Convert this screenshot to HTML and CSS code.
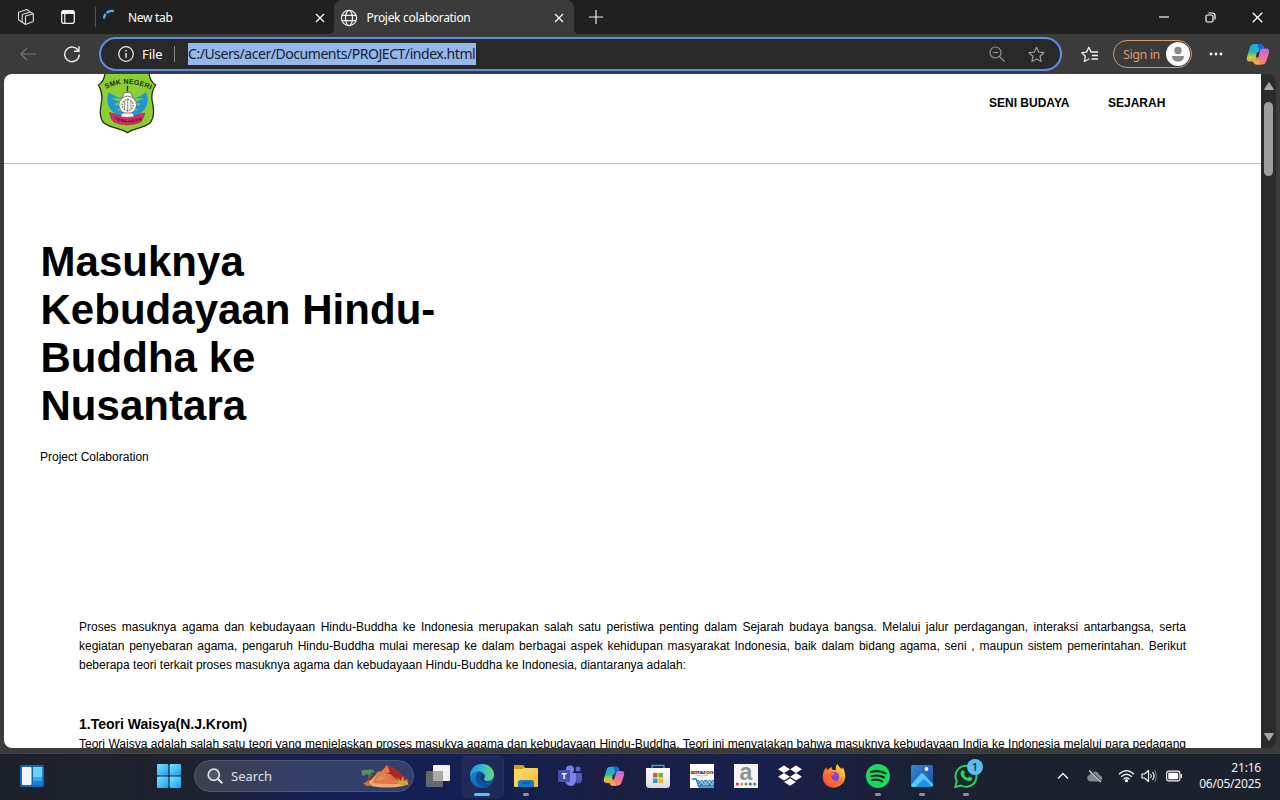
FILE: index.html
```html
<!DOCTYPE html>
<html lang="id">
<head>
<meta charset="utf-8">
<title>Projek colaboration</title>
<link rel="stylesheet" href="styles.css">
</head>
<body>
<svg class="defs" width="0" height="0">
  <defs>
    <linearGradient id="cpA" x1="0" y1="0" x2="0" y2="1"><stop offset="0" stop-color="#16a4ee"/><stop offset=".45" stop-color="#2bb3b0"/><stop offset=".75" stop-color="#c6cb3c"/><stop offset="1" stop-color="#f0a52c"/></linearGradient>
    <linearGradient id="cpB" x1="0" y1="0" x2="0" y2="1"><stop offset="0" stop-color="#b06cf0"/><stop offset=".5" stop-color="#ee6fa2"/><stop offset="1" stop-color="#f9885a"/></linearGradient>
    <linearGradient id="win" x1="0" y1="0" x2="1" y2="1"><stop offset="0" stop-color="#7ce5fb"/><stop offset="1" stop-color="#169bf4"/></linearGradient>
    <linearGradient id="edgeTop" x1="0" y1="0" x2="1" y2="0"><stop offset="0" stop-color="#2294d8"/><stop offset=".5" stop-color="#30b9d4"/><stop offset="1" stop-color="#66dc62"/></linearGradient>
    <linearGradient id="edgeLow" x1="0" y1="0" x2="1" y2="1"><stop offset="0" stop-color="#1b8cdf"/><stop offset="1" stop-color="#0c4f9e"/></linearGradient>
    <linearGradient id="folder" x1="0" y1="0" x2="1" y2="1"><stop offset="0" stop-color="#ffe07a"/><stop offset="1" stop-color="#f8bb2a"/></linearGradient>
    <linearGradient id="fox" x1="1" y1="0" x2="0" y2="1"><stop offset="0" stop-color="#ffe94a"/><stop offset=".45" stop-color="#ff9428"/><stop offset="1" stop-color="#f02f50"/></linearGradient>
    <linearGradient id="photo" x1="0" y1="0" x2="1" y2="1"><stop offset="0" stop-color="#3587d8"/><stop offset="1" stop-color="#1750a2"/></linearGradient>
    <linearGradient id="bag" x1="0" y1="0" x2="0" y2="1"><stop offset="0" stop-color="#ffffff"/><stop offset="1" stop-color="#dcdcdf"/></linearGradient>
    <linearGradient id="sand" x1="0" y1="0" x2="1" y2="0"><stop offset="0" stop-color="#f4a66c"/><stop offset="1" stop-color="#c5482c"/></linearGradient>
    <symbol id="copilot" viewBox="0 0 24 22">
      <path fill="url(#cpA)" d="M8 1h6c2 0 3 1 3.500 3l.7 2.500h-3c-1.600 0-2.400.9-2.800 2.400L10.500 16c-.4 1.500-1.500 2.500-3 2.500H3.500C1 18.500.3 16.500 1 14L4 4C4.600 2 6 1 8 1z"/>
      <path fill="#1763d2" d="M11.500 1H14c2 0 3 1 3.500 3l.7 2.500h-3L13 7C12 3.500 12.500 2 11.500 1z"/>
      <path fill="url(#cpB)" d="M16.500 5.500H20c2.700 0 3.600 2 3 4.500l-2.800 8.200c-.7 2-2 3.300-4 3.300h-5.700c-1.700 0-2.700-1-3.300-3l-.5-2h2.600c1.500 0 2.300-1 2.700-2.400L14 8c.4-1.500 1-2.500 2.500-2.500z"/>
      <path fill="#f7a34c" d="M6.700 16.500h2.600c1.300 0 2-.6 2.500-1.800l1 3.300c.4 1.500.8 3 2.200 3.500h-4.500c-1.700 0-2.700-1-3.300-3z"/>
      <path fill="#293346" d="M10.700 9.500 13.600 9l-1.300 5-2.500.3z"/>
    </symbol>
  </defs>
</svg>

<header class="tabs">
  <svg class="ic workspaces" viewBox="0 0 18 18"><g fill="none" stroke="#ddd" stroke-width="1.100" stroke-linejoin="round"><path d="M8.500 8 16.300 5.800V13.500L8.500 16.500z"/><path d="M8.500 16.500 5.200 14.300V6.500L13 3.900M5.200 14.300 1.500 11.800V4.300L9.800 1.500M13 3.900l3.300 1.900M9.800 1.500 13 3.900"/></g></svg>
  <svg class="ic tabaction" viewBox="0 0 16 16"><rect x="1.700" y="1.700" width="12.600" height="12.600" rx="2" fill="none" stroke="#f2f2f2" stroke-width="1.300"/><path d="M1.500 5V3.500q0-2 2-2h9q2 0 2 2V5z" fill="#f2f2f2"/><path d="M4.800 5v9" stroke="#f2f2f2" stroke-width="1.200"/></svg>
  <span class="tabsep"></span>
  <div class="tab first">
    <svg class="ic loading" viewBox="0 0 14 14"><path d="M2 10.500A8 8 0 0 1 3.700 6M4.500 5A8 8 0 0 1 12 3.200" fill="none" stroke="#55ade3" stroke-width="2.400"/></svg>
    <span class="label newtab">New tab</span>
    <svg class="ic close" viewBox="0 0 10 10"><path d="M1 1l8 8M9 1l-8 8" stroke="#fff" stroke-width="1.200"/></svg>
  </div>
  <div class="tab active">
    <svg class="ic globe" viewBox="0 0 18 18"><g fill="none" stroke="#eee" stroke-width="1.200"><circle cx="9" cy="9" r="7.600"/><ellipse cx="9" cy="9" rx="3.500" ry="7.600"/><path d="M2 6.300h14M2 11.700h14"/></g></svg>
    <span class="label projek">Projek colaboration</span>
    <svg class="ic close" viewBox="0 0 10 10"><path d="M1 1l8 8M9 1l-8 8" stroke="#fff" stroke-width="1.200"/></svg>
  </div>
  <svg class="ic plus" viewBox="0 0 14 14"><path d="M7 0v14M0 7h14" stroke="#eee" stroke-width="1.200"/></svg>
  <div class="winctl">
    <svg width="10" height="10" viewBox="0 0 10 10"><path d="M0 5h10" stroke="#fff" stroke-width="1.200"/></svg>
    <svg width="11" height="11" viewBox="0 0 11 11"><g fill="none" stroke="#fff" stroke-width="1.200"><rect x="1" y="3" width="7" height="7" rx="1.500"/><path d="M3.500 1h4q2.500 0 2.500 2.500v4"/></g></svg>
    <svg width="11" height="11" viewBox="0 0 11 11"><path d="M.7.700l9.600 9.600M10.300.700.700 10.300" stroke="#fff" stroke-width="1.300"/></svg>
  </div>
</header>

<nav class="toolbar">
  <svg class="ic back" viewBox="0 0 16 14"><path d="M16 7H1M7 .8 1 7l6 6.200" fill="none" stroke="#777" stroke-width="1.200"/></svg>
  <svg class="ic reload" viewBox="0 0 18 18"><path d="M15.500 6A7.300 7.300 0 1 0 16.300 9.500M16 1.300V6.300H11" fill="none" stroke="#eee" stroke-width="1.400"/></svg>
  <div class="address">
    <svg class="ic info" viewBox="0 0 16 16"><circle cx="8" cy="8" r="7.300" fill="none" stroke="#eee" stroke-width="1.200"/><path d="M8 7v4.700M8 4v1.600" stroke="#eee" stroke-width="1.400"/></svg>
    <span class="file">File</span>
    <span class="filesep"></span>
    <span class="url">C:/Users/acer/Documents/PROJECT/index.html</span>
    <svg class="ic zoomout" viewBox="0 0 16 16"><g fill="none" stroke="#969696" stroke-width="1.200"><circle cx="6.500" cy="6.500" r="5.500"/><path d="M10.500 10.500l5 5M3.800 6.500h5.400"/></g></svg>
    <svg class="ic star" viewBox="0 0 17 17"><path d="M8.500 1.200l2.200 4.900 5.300.6-4 3.600 1.100 5.300-4.600-2.700-4.600 2.700L5 10.300 1 6.700l5.300-.6z" fill="none" stroke="#999" stroke-width="1.200" stroke-linejoin="round"/></svg>
  </div>
  <svg class="ic favs" viewBox="0 0 18 17"><path d="M8.500 12.700 3.300 15.500l1-5.200-3.500-3.600 4.700-.6L7.800 1.300 10 6H17M11 9.500h6M10.500 13h6.500" fill="none" stroke="#f2f2f2" stroke-width="1.300" stroke-linejoin="round"/></svg>
  <div class="signin"><span>Sign in</span><svg width="24" height="24" viewBox="0 0 24 24"><circle cx="12" cy="12" r="12" fill="#fafafa"/><circle cx="12" cy="8.500" r="3.700" fill="#898989"/><path d="M6 14h12c0 3.800-2.800 5.500-6 5.500S6 17.800 6 14z" fill="#898989"/></svg></div>
  <svg class="ic more" viewBox="0 0 14 4"><g fill="#f2f2f2"><circle cx="2" cy="2" r="1.400"/><circle cx="7" cy="2" r="1.400"/><circle cx="12" cy="2" r="1.400"/></g></svg>
  <svg class="ic copilot"><use href="#copilot"/></svg>
</nav>

<div class="viewport">
  <main class="page">
    <div class="sitehead">
      <svg class="logo" viewBox="0 0 60 62">
        <path d="M8-3Q8 7 1.500 11 5.500 18 4.800 26C3 36 2 44 7 49 13 54 24 54 30.500 58.700 37 54 47 54 53 49 58 43 57 34 55 26Q54 18 58.700 11 52 7 52-3z" fill="#8bcf35" stroke="#25301c" stroke-width="1.300"/>
        <path id="arc" d="M9 15Q30 4 54 16" fill="none"/>
        <text class="logotext"><textPath href="#arc">SMK NEGERI</textPath></text>
        <path d="M30.500 12v5.500" stroke="#222" stroke-width="1.200"/>
        <path d="M12 18Q8 26 13 35 19 42 28 43L26 37 20 36 24 33 17 30 23 28 14 24 27 25Q17 23 12 18z" fill="#1f95d4"/>
        <path d="M49 18Q53 26 48 35 42 42 33 43L35 37 41 36 37 33 44 30 38 28 47 24 34 25Q44 23 49 18z" fill="#1f95d4"/>
        <g fill="#f8f8f4" stroke="#555" stroke-width=".7"><path d="M25 24l2.500-5.500h6L36 24l-3 4h-5z"/><circle cx="30.700" cy="31" r="8.800"/><path d="M25 39l-2 5q8 4 15 0l-2-5z"/></g>
        <circle cx="30.700" cy="31" r="5.500" fill="none" stroke="#666" stroke-width="1.200" stroke-dasharray="1.500 1.300"/>
        <path d="M30.700 24v14M27.500 27v8M34 27v8" stroke="#777" stroke-width=".8"/>
        <path d="M12.500 38.500Q14 46 17 48 30 54 44 48 46 45 48 39L43 40Q30 47 18 40z" fill="#dc2a62" stroke="#7c2541" stroke-width=".5"/>
        <path id="ribbon" d="M17 45.500Q30.500 52 46 45.500" fill="none"/>
        <text class="ribbontext"><textPath href="#ribbon">TENGARAN</textPath></text>
      </svg>
      <div class="menu"><a class="m1">SENI BUDAYA</a><a class="m2">SEJARAH</a></div>
    </div>
    <section class="hero">
      <h1>Masuknya<br>Kebudayaan Hindu-<br>Buddha ke<br>Nusantara</h1>
      <p class="sub">Project Colaboration</p>
    </section>
    <section class="body">
      <p class="line">Proses masuknya agama dan kebudayaan Hindu-Buddha ke Indonesia merupakan salah satu peristiwa penting dalam Sejarah budaya bangsa. Melalui jalur perdagangan, interaksi antarbangsa, serta</p>
      <p class="line">kegiatan penyebaran agama, pengaruh Hindu-Buddha mulai meresap ke dalam berbagai aspek kehidupan masyarakat Indonesia, baik dalam bidang agama, seni , maupun sistem pemerintahan. Berikut</p>
      <p class="line short">beberapa teori terkait proses masuknya agama dan kebudayaan Hindu-Buddha ke Indonesia, diantaranya adalah:</p>
      <h3>1.Teori Waisya(N.J.Krom)</h3>
      <p class="line">Teori Waisya adalah salah satu teori yang menjelaskan proses masukya agama dan kebudayaan Hindu-Buddha. Teori ini menyatakan bahwa masuknya kebudayaan India ke Indonesia melalui para pedagang</p>
    </section>
  </main>
  <div class="scrollbar">
    <svg width="10" height="8" viewBox="0 0 10 8"><path d="M5 .5 9.500 7.500H.5z" fill="#a5a5a5" stroke="#a5a5a5" stroke-linejoin="round"/></svg>
    <span class="thumb"></span>
    <svg class="down" width="10" height="8" viewBox="0 0 10 8"><path d="M5 7.500 9.500.5H.5z" fill="#a5a5a5" stroke="#a5a5a5" stroke-linejoin="round"/></svg>
  </div>
</div>

<footer class="taskbar">
  <svg class="widgets" width="24" height="22" viewBox="0 0 24 22"><rect width="24" height="22" rx="1.500" fill="#1368b5"/><rect x="2" y="2" width="9.500" height="18" rx="1" fill="#f5f5f7"/><rect x="13" y="2" width="9.300" height="10" fill="#6dd0f9"/><rect x="13" y="12" width="9.300" height="4" fill="#38a5ec"/><rect x="13" y="16" width="9.300" height="4.300" fill="#0c82e2"/></svg>
  <svg class="start" width="24" height="24" viewBox="0 0 24 24"><g fill="url(#win)"><rect width="11.400" height="11.400" rx="1"/><rect x="12.600" width="11.400" height="11.400" rx="1"/><rect y="12.600" width="11.400" height="11.400" rx="1"/><rect x="12.600" y="12.600" width="11.400" height="11.400" rx="1"/></g></svg>
  <div class="search">
    <svg width="16" height="16" viewBox="0 0 16 16"><circle cx="6.800" cy="6.800" r="5.600" fill="rgba(255,255,255,.12)" stroke="#e0e2ea" stroke-width="1.700"/><path d="M10.800 10.800l4 4" stroke="#e0e2ea" stroke-width="2" stroke-linecap="round"/></svg>
    <span>Search</span>
    <svg class="desert" width="52" height="26" viewBox="0 0 52 26">
      <ellipse cx="28" cy="20" rx="21" ry="4.500" fill="#f0a873"/>
      <path d="M11 18 19 9 23 8 28 2 36 6 50 18 44 21H15z" fill="url(#sand)"/><path d="M28 2 36 6 50 18 40 18 31 11 22 10z" fill="#a92728"/><path d="M28 2l3 7-10 4-4 5 15-2 14 3-10 1H14l4-11 5-1z" fill="#e07848"/>
      <path d="M9 21l1-11M10 15l4-4" stroke="#8a5230" stroke-width="1.500"/><path d="M2 8q3-2 6-1 5-2 8 2l-4 1-1 3-3-2-4 2zM2 12l4-2v3z" fill="#56915a"/>
      <path d="M41 22l-6-4 5 1-2-5 4 4 2-5 1 5 4-2-2 4 3 2z" fill="#c6a63b"/><path d="M4 20l5-1 5 4H7z" fill="#ce7336"/>
    </svg>
  </div>
  <div class="apps">
    <span class="app"><svg viewBox="0 0 24 24"><rect x="7" y="1" width="17" height="16" rx="1" fill="#f2f2f4"/><rect x="0" y="7" width="17" height="16" rx="1" fill="#65686c"/><rect x="7" y="7" width="10" height="10" fill="#aaa"/></svg></span>
    <span class="app current"><svg viewBox="0 0 24 24"><circle cx="12" cy="12" r="12" fill="url(#edgeLow)"/><path d="M.3 10C1 4 6 0 12 0c7 0 12 5 12 10.500 0 4-3 6.500-6.500 6.500-3 0-4.500-1.200-3.400-2.700C16 11 13 7.500 9 7.500 5 7.500 1.500 9 .3 13z" fill="url(#edgeTop)"/><path d="M9 7.500c-5 3-4 13 4 15.500 4 0 7-2 9-4.500-5 2-10 0-10.500-4.500C11.300 11 13 10 12 8.500c-1-.8-2-1-3-1z" fill="#104f9e"/><path d="M12 9c3 1 3.500 4 2 5.500-1 1.500 1 2.500 3 2.500h4q-4 3-8 .5c-3-2-2.500-6-1-8.500z" fill="#183769"/></svg><i class="run wide"></i></span>
    <span class="app"><svg viewBox="0 0 24 24"><path d="M0 2q0-1 1-1h8l2 3h12q1 0 1 1v17q0 1-1 1H1q-1 0-1-1z" fill="url(#folder)"/><path d="M0 4V2q0-1 1-1h8l1.500 2L9 5H0z" fill="#db9a17"/><path d="M4 23v-4.500Q4 16 6.500 16h11q2.500 0 2.500 2.500V23z" fill="#1678c9"/><path d="M8 19h8" stroke="#0c549c" stroke-width="1.500"/></svg><i class="run"></i></span>
    <span class="app"><svg viewBox="0 0 24 24"><circle cx="12" cy="5.500" r="4" fill="#7b83eb"/><circle cx="20" cy="5" r="2.500" fill="#5d65ca"/><path d="M15 9h8q1 0 1 1v6q-1 4-5 3.500z" fill="#5058b9"/><path d="M7 9h11v8q-1 5.500-6 5-4-1-5-5z" fill="#7b83eb"/><rect y="6" width="12" height="12" rx="1" fill="#4550af"/><text x="6" y="15.300" class="teamsT">T</text></svg></span>
    <span class="app"><svg viewBox="0 0 24 24"><use href="#copilot" x="1" y="1" width="22" height="22"/></svg></span>
    <span class="app"><svg viewBox="0 0 24 24"><path d="M6 5V1.500h12V5" fill="none" stroke="#35a8d8" stroke-width="1.300"/><path d="M0 4h24v16.500q0 3.500-3.500 3.500h-17Q0 24 0 20.500z" fill="url(#bag)"/><path d="M7 9h4.500v4.500H7z" fill="#e85a2a"/><path d="M12.500 9H17v4.500h-4.500z" fill="#7bb51d"/><path d="M7 14.500h4.500V19H7z" fill="#1aa2e4"/><path d="M12.500 14.500H17V19h-4.500z" fill="#f9b51b"/></svg></span>
    <span class="app"><svg viewBox="0 0 24 24"><path fill="#fff" d="M0 0h24v24H0z"/><text x="12" y="9.500" class="amz">amazon</text><path d="M6 11q6 2 12 0" fill="none" stroke="#f59b25" stroke-width=".8"/><path d="M2 15h4l3 8h15" fill="none" stroke="#2279b6" stroke-width="1.300"/><path d="M7 16h17v6H9z" fill="#2c83bd"/><path d="M8 18l2-2 4 5 4-5 4 5 2-3M9 21l4-5 4 5 4-5 3 3" stroke="#d6eefa" stroke-width=".8" fill="none"/></svg></span>
    <span class="app"><svg viewBox="0 0 24 24"><path fill="#f4f4f4" d="M0 0h24v24H0z"/><text x="12" y="15.500" class="bigA">a</text><circle cx="3.300" cy="20" r="1.500" fill="#e22d33"/><circle cx="7.700" cy="20" r="1.500" fill="#f29b2c"/><circle cx="12" cy="20" r="1.500" fill="#35a957"/><circle cx="16.300" cy="20" r="1.500" fill="#7650b1"/><circle cx="20.700" cy="20" r="1.500" fill="#3081d5"/></svg></span>
    <span class="app"><svg viewBox="0 0 24 24"><path fill="#fff" d="M6 1.500 12 5.200 6 9 0 5.200zM18 1.500l6 3.700L18 9l-6-3.800zM6 9l6 3.700-6 3.800-6-3.800zM18 9l6 3.700-6 3.800-6-3.800zM12 14.200l6 3.800-6 3.800L6 18z"/></svg></span>
    <span class="app"><svg viewBox="0 0 24 24"><path d="M1.500 8Q3 4 4.500 3.500q0 2 1 2.500 2-2 4-3 0 2 1.500 3 2 0 3-.5-1-3 1.500-5.500 1 3 4.500 5 1-1 1-2 5 11-1 17-8 7-16 1Q-1 16 1.500 8z" fill="url(#fox)"/><circle cx="12" cy="13" r="5.300" fill="#8546d8"/><path d="M5 11q3-4 8-2-1 3-4 3 1 5 6 5 5 0 5-6 2 10-7 11Q4 21 5 11z" fill="#fb6b2c"/></svg></span>
    <span class="app"><svg viewBox="0 0 24 24"><circle cx="12" cy="12" r="12" fill="#1ed760"/><path d="M5 8q8-2.200 14.500 1.300M5.500 12.200q7-1.800 12.500 1.300M6.200 16q5.500-1.400 10 1.300" fill="none" stroke="#10291a" stroke-width="2.100" stroke-linecap="round"/></svg><i class="run"></i></span>
    <span class="app"><svg viewBox="0 0 24 24"><rect x="1" y="1" width="22" height="22" rx="2" fill="url(#photo)"/><path d="M1 21 10.500 10q1.500-1.500 3 0L23 20v1q0 2-2 2H3q-2 0-2-2z" fill="#58c6fb"/><path d="M5 23 14 15l8 7.500-1 .5z" fill="#1b91e5"/><circle cx="16.500" cy="5" r="1.900" fill="#fff"/></svg><i class="run"></i></span>
    <span class="app"><svg viewBox="0 0 24 24"><path d="M1.200 23 2.800 17.300A10.500 10.500 0 1 1 7 21.500z" fill="#192c27" stroke="#2bd366" stroke-width="1.900"/><path d="M8 6.500q1.500-1 2.200 1l.7 1.700q-.8 1-.8 1.500 1.200 2.300 3.700 3.200l1.500-1.500 3 1.500q0 3-3 3.400Q8.500 16 6.500 10 6.500 7.500 8 6.500z" fill="#2bd366"/></svg><i class="run"></i><b class="badge">1</b></span>
  </div>
  <div class="tray">
    <svg class="chev" width="12" height="8" viewBox="0 0 12 8"><path d="M1 6.500l5-5 5 5" fill="none" stroke="#f2f2f2" stroke-width="1.400"/></svg>
    <svg class="cloud" width="17" height="14" viewBox="0 0 17 14"><path d="M4 12.500a3.500 3.500 0 0 1-.2-6.800 5 5 0 0 1 9.500.5 3.200 3.200 0 0 1 .4 6.300z" fill="#85888f"/><path d="M3.500 1.500l12 11.500" stroke="#242a34" stroke-width="2"/><path d="M3 1.500l12 11.500" stroke="#d5d5d5" stroke-width="1.100"/></svg>
    <svg class="wifi" width="17" height="14" viewBox="0 0 17 14"><g fill="none" stroke="#f2f2f2" stroke-width="1.300"><path d="M1 5.300q7.500-7.500 15 0M3.200 7.800q5.300-5.200 10.600 0M5.500 10.200q3-2.900 6 0"/></g><circle cx="8.500" cy="11.700" r="1.600" fill="#f2f2f2"/></svg>
    <svg class="sound" width="16" height="14" viewBox="0 0 16 14"><g fill="none" stroke="#f2f2f2" stroke-width="1.200" stroke-linejoin="round"><path d="M1 5h2.500L7.500 1.500v11L3.500 9H1z"/><path d="M9.500 5q1.500 2 0 4M11.500 3q3 4 0 8"/><path d="M13.500 1q3.500 6 0 12" stroke="#6d7078"/></g></svg>
    <svg class="battery" width="16" height="12" viewBox="0 0 16 12"><rect x=".6" y="1.100" width="13.300" height="9.800" rx="2.500" fill="none" stroke="#f2f2f2" stroke-width="1.100"/><rect x="2.300" y="2.800" width="9.900" height="6.400" rx="1" fill="#fff"/><path d="M15.300 4v4" stroke="#f2f2f2" stroke-width="1.400"/></svg>
    <div class="clock"><span>21:16</span><span class="date">06/05/2025</span></div>
  </div>
</footer>
</body>
</html>
```
FILE: styles.css
```css
* { box-sizing: border-box; }
body { margin: 0; width: 1280px; height: 800px; overflow: hidden; background: #3b3b3b; display: flex; flex-direction: column; font-family: "Noto Sans", "Open Sans", sans-serif; }
svg { display: block; flex: none; }
.defs { position: absolute; }

/* Tab strip */
.tabs { height: 34px; flex: none; background: #202020; display: flex; align-items: center; color: #fff; font-size: 12px; }
.workspaces { width: 18px; height: 18px; margin-left: 17px; }
.tabaction { width: 16px; height: 16px; margin-left: 25px; }
.tabsep { width: 1px; height: 20px; margin-left: 19px; background: #555; }
.tab { display: flex; align-items: center; height: 34px; }
.first { width: 238px; padding-left: 6px; }
.loading { width: 14px; height: 14px; margin-top: -4px; }
.label { white-space: nowrap; line-height: 16px; padding-top: 1px; }
.newtab { margin-left: 12px; letter-spacing: -.3px; }
.close { width: 10px; height: 10px; margin-left: auto; margin-right: 9.5px; margin-top: 1px; }
.active { position: relative; width: 240px; padding-left: 6px; background: #3b3b3b; border-radius: 8px 8px 0 0; }
.active .close { margin-right: 10.5px; }
.active::before, .active::after { content: ""; position: absolute; bottom: 0; width: 6px; height: 6px; }
.active::before { left: -6px; background: radial-gradient(circle at 0 0, #202020 6px, #3b3b3b 6.5px); }
.active::after { right: -6px; background: radial-gradient(circle at 100% 0, #202020 6px, #3b3b3b 6.5px); }
.globe { width: 18px; height: 18px; margin-top: 1px; }
.projek { margin-left: 8.5px; letter-spacing: -.3px; }
.plus { width: 14px; height: 14px; margin-left: 15px; }
.winctl { display: flex; align-items: center; gap: 36px; margin-left: auto; margin-right: 17px; }

/* Toolbar */
.toolbar { height: 40px; flex: none; display: flex; align-items: center; color: #fff; }
.back { width: 16px; height: 14px; margin-left: 20px; }
.reload { width: 18px; height: 18px; margin-left: 27px; }
.address { width: 963px; height: 34px; margin-left: 18px; padding: 0 15px 0 17px; background: #292929; border: 2px solid #5c8fe3; border-radius: 17px; display: flex; align-items: center; }
.info { width: 16px; height: 16px; }
.file { width: 22px; margin-left: 8px; font-size: 13px; letter-spacing: -.1px; white-space: nowrap; }
.filesep { width: 1px; height: 16px; margin-left: 10px; background: #888; }
.url { width: 288px; height: 22px; line-height: 22px; margin-left: 13px; background: #95b7e9; color: #16202e; font-size: 14px; letter-spacing: -.45px; white-space: nowrap; }
.zoomout { width: 16px; height: 16px; margin-left: auto; }
.star { width: 17px; height: 17px; margin-left: 23px; }
.favs { width: 18px; height: 17px; margin-left: 19px; }
.signin { width: 79px; height: 28px; margin-left: 14px; padding: 0 1px 0 9px; border: 1px solid #d89969; border-radius: 14px; color: #df9d6c; font-size: 12.5px; letter-spacing: -.4px; display: flex; align-items: center; justify-content: space-between; white-space: nowrap; }
.more { width: 14px; height: 4px; margin-left: 17px; }
.copilot { width: 24px; height: 22px; margin-left: 23px; }

/* Page */
.viewport { height: 674px; flex: none; margin: 0 4px; display: flex; }
.page { width: 1257px; height: 674px; overflow: hidden; background: #fff; border-radius: 8px 0 0 8px; color: #000; font-family: "Liberation Sans", Arial, sans-serif; }
.sitehead { height: 90px; border-bottom: 1px solid #bdbdbd; display: flex; justify-content: space-between; align-items: flex-start; padding: 0 96px 0 93px; }
.logo { width: 60px; height: 62px; }
.logotext { font: bold 7px "Liberation Sans", Arial, sans-serif; letter-spacing: .2px; fill: #1c2b14; }
.ribbontext { font: bold 4.5px "Liberation Sans", Arial, sans-serif; fill: #4c1027; letter-spacing: .4px; }
.menu { display: flex; padding-top: 21px; font-size: 12px; line-height: 16px; font-weight: bold; white-space: nowrap; }
.m1 { width: 119px; }
.m2 { width: 57px; }
.hero { padding: 74px 0 0 36px; height: 454px; }
h1 { margin: 0 0 0 .5px; font-size: 42px; line-height: 48px; letter-spacing: .03px; white-space: nowrap; }
.sub { margin: 18px 0 0; font-size: 12px; line-height: 19px; }
.body { padding-left: 75px; }
.line { margin: 0; width: 1107px; font-size: 12px; line-height: 19px; text-align: justify; text-align-last: justify; white-space: nowrap; }
.short { width: 607px; }
h3 { margin: 38px 0 0; font-size: 14px; line-height: 22px; white-space: nowrap; }
.scrollbar { width: 15px; background: #2b2b2b; border-radius: 0 8px 8px 0; display: flex; flex-direction: column; align-items: center; padding: 8px 0 7px; }
.thumb { width: 9px; height: 74px; margin-top: 11.5px; border-radius: 5px; background: #9d9d9d; }
.down { margin-top: auto; }

/* Taskbar */
.taskbar { height: 47px; flex: none; margin-top: 5px; padding-bottom: 2px; border-top: 1px solid #40434b; display: flex; align-items: center; background: linear-gradient(90deg, #1d212b 0, #1c222e 190px, #141f58 330px, #141f52 480px, #1a1f42 620px, #17204e 750px, #1a203d 850px, #1c222d 980px, #1c222d 100%); }
.widgets { margin-left: 20px; }
.start { margin-left: 113px; }
.search { width: 220px; height: 32px; margin-left: 13px; margin-top: -1px; padding: 0 2px 0 12px; border: 1px solid #515871; border-radius: 16px; background: linear-gradient(90deg, #3c414c, #343f69 50%, #343f6d); display: flex; align-items: center; color: #dde0ea; font-size: 13px; }
.search span { margin-left: 8px; }
.desert { margin-left: auto; }
.apps { display: flex; margin-left: 2px; }
.app { width: 44px; height: 44px; display: flex; align-items: center; justify-content: center; position: relative; }
.app svg { width: 24px; height: 24px; margin-top: -1px; overflow: visible; }
.current::before { content: ""; position: absolute; left: 2px; top: 2px; width: 40px; height: 40px; border: 1px solid #26315f; border-radius: 5px; background: #1e2958; }
.current svg { position: relative; }
.run { position: absolute; left: 19px; bottom: 2px; width: 6px; height: 3px; border-radius: 2px; background: #9194a0; }
.wide { left: 14px; width: 16px; background: #60c0f5; }
.badge { position: absolute; left: 23px; top: 5px; width: 16px; height: 16px; border-radius: 8px; background: #5cbdf5; color: #102030; font-size: 11px; line-height: 16px; text-align: center; font-weight: 500; }
.teamsT { font: bold 9px "Open Sans", sans-serif; fill: #fff; text-anchor: middle; }
.amz { font: bold 6.2px "Liberation Sans", Arial, sans-serif; fill: #171717; text-anchor: middle; }
.bigA { font: bold 23px "Liberation Sans", Arial, sans-serif; fill: #919191; text-anchor: middle; }
.tray { margin-left: auto; margin-right: 19px; display: flex; align-items: center; color: #f4f4f4; }
.chev { margin-right: 17px; }
.cloud { margin-right: 15px; }
.wifi { margin-right: 6px; }
.sound { margin-right: 9px; }
.clock { width: 79px; display: flex; flex-direction: column; align-items: flex-end; font-size: 12px; line-height: 16px; letter-spacing: -.2px; white-space: nowrap; }
```
